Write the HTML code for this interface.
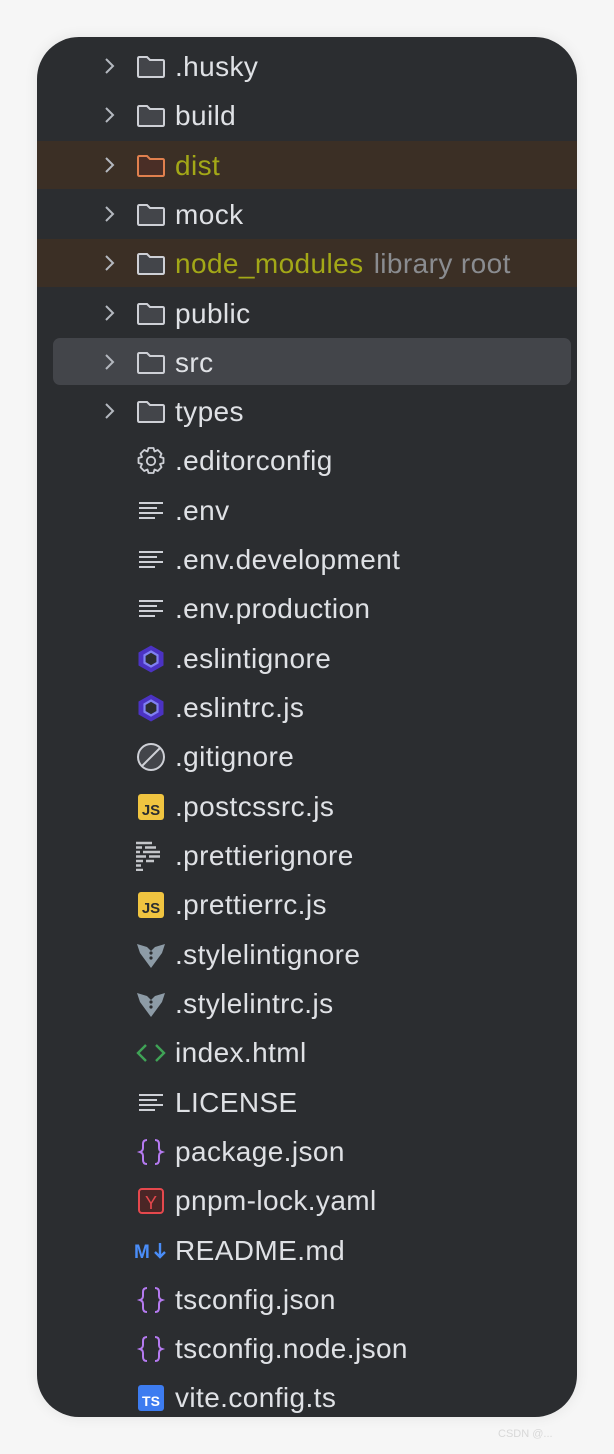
<!DOCTYPE html>
<html><head><meta charset="utf-8"><style>
body{margin:0;width:614px;height:1454px;background:#f6f6f6;position:relative;overflow:hidden;font-family:"Liberation Sans",sans-serif}
.panel{position:absolute;left:37px;top:37px;width:540px;height:1380px;background:#2b2d30;border-radius:42px;overflow:hidden;box-shadow:0 0 14px rgba(0,0,0,.08)}
.r{position:absolute;left:0;width:540px;height:49px}
.t{position:absolute;left:138px;top:0;line-height:49px;font-size:28px;letter-spacing:0.4px;color:#dfe1e5;white-space:nowrap}
.i{position:absolute;left:99px;top:10px;width:30px;height:30px}
.c{position:absolute;left:62px;top:14px;width:20px;height:20px}
</style></head><body>
<div class="panel">
<div style="position:absolute;left:0;top:104px;width:540px;height:48px;background:#3b2f25"></div>
<div style="position:absolute;left:0;top:202px;width:540px;height:48px;background:#3b2f25"></div>
<div style="position:absolute;left:16px;top:301px;width:518px;height:47px;background:#43454a;border-radius:7px"></div>
<svg width="0" height="0" style="position:absolute"><defs>
<symbol id="ch" viewBox="0 0 20 20"><path d="M7 3l7 7-7 7" fill="none" stroke="#b4b8bf" stroke-width="2"/></symbol>
<symbol id="fd" viewBox="0 0 30 30"><path d="M2 6.5q0-1.5 1.5-1.5h7.5l3 3h12.5q1.5 0 1.5 1.5v14q0 1.5-1.5 1.5h-23q-1.5 0-1.5-1.5z" fill="#43454a" stroke="#ced0d6" stroke-width="2"/></symbol>
<symbol id="fo" viewBox="0 0 30 30"><path d="M2 6.5q0-1.5 1.5-1.5h7.5l3 3h12.5q1.5 0 1.5 1.5v14q0 1.5-1.5 1.5h-23q-1.5 0-1.5-1.5z" fill="#4a2e26" stroke="#e0804e" stroke-width="2"/></symbol>
<symbol id="tx" viewBox="0 0 30 30"><path d="M3 7h24M3 12h18M3 17h24M3 22h16" stroke="#ced0d6" stroke-width="2"/></symbol>
<symbol id="es" viewBox="0 0 30 30"><path d="M15 1.5l12.5 7v13L15 28.5 2.5 21.5v-13z" fill="#4b32c3"/><path d="M15 7.5l6.5 3.8v7.4L15 22.5 8.5 18.7v-7.4z" fill="#2b2d30" stroke="#8080f2" stroke-width="2.2"/></symbol>
<symbol id="js" viewBox="0 0 30 30"><rect x="2" y="2" width="26" height="26" rx="3" fill="#f0c440"/><text x="15" y="23" font-size="15" font-family="Liberation Sans" font-weight="bold" text-anchor="middle" fill="#2b2d30">JS</text></symbol>
<symbol id="br" viewBox="0 0 30 30"><path d="M11 3q-4 0-4 4v4q0 3-3 4 3 1 3 4v4q0 4 4 4M19 3q4 0 4 4v4q0 3 3 4-3 1-3 4v4q0 4-4 4" fill="none" stroke="#b57af0" stroke-width="2"/></symbol>
<symbol id="sl" viewBox="0 0 30 30"><path d="M1 4l10 3 4 4 4-4 10-3-3 9-11 15-11-15z" fill="#8d9ba6"/><circle cx="15" cy="13" r="1.6" fill="#2b2d30"/><circle cx="15" cy="18" r="1.6" fill="#2b2d30"/></symbol>
</defs></svg>

<div class="r" style="top:5px"><svg class="c"><use href="#ch" width="20" height="20"/></svg><svg class="i"><use href="#fd" width="30" height="30"/></svg><span class="t">.husky</span></div>
<div class="r" style="top:54px"><svg class="c"><use href="#ch" width="20" height="20"/></svg><svg class="i"><use href="#fd" width="30" height="30"/></svg><span class="t">build</span></div>
<div class="r" style="top:104px"><svg class="c"><use href="#ch" width="20" height="20"/></svg><svg class="i"><use href="#fo" width="30" height="30"/></svg><span class="t" style="color:#a3a817">dist</span></div>
<div class="r" style="top:153px"><svg class="c"><use href="#ch" width="20" height="20"/></svg><svg class="i"><use href="#fd" width="30" height="30"/></svg><span class="t">mock</span></div>
<div class="r" style="top:202px"><svg class="c"><use href="#ch" width="20" height="20"/></svg><svg class="i"><use href="#fd" width="30" height="30"/></svg><span class="t"><span style="color:#a3a817">node_modules</span> <span style="color:#8a8c90;margin-left:2px">library root</span></span></div>
<div class="r" style="top:252px"><svg class="c"><use href="#ch" width="20" height="20"/></svg><svg class="i"><use href="#fd" width="30" height="30"/></svg><span class="t">public</span></div>
<div class="r" style="top:301px"><svg class="c"><use href="#ch" width="20" height="20"/></svg><svg class="i"><use href="#fd" width="30" height="30"/></svg><span class="t">src</span></div>
<div class="r" style="top:350px"><svg class="c"><use href="#ch" width="20" height="20"/></svg><svg class="i"><use href="#fd" width="30" height="30"/></svg><span class="t">types</span></div>
<div class="r" style="top:399px"><svg class="i" viewBox="0 0 30 30"><path d="M12.5 2h5l1 3.5 3.3-1.5 3.7 3.7-1.5 3.3 3.5 1v5l-3.5 1 1.5 3.3-3.7 3.7-3.3-1.5-1 3.5h-5l-1-3.5-3.3 1.5-3.7-3.7 1.5-3.3-3.5-1v-5l3.5-1-1.5-3.3 3.7-3.7 3.3 1.5z" fill="none" stroke="#ced0d6" stroke-width="1.8" stroke-linejoin="round"/><circle cx="15" cy="15" r="4.2" fill="none" stroke="#ced0d6" stroke-width="1.8"/></svg><span class="t">.editorconfig</span></div>
<div class="r" style="top:449px"><svg class="i"><use href="#tx" width="30" height="30"/></svg><span class="t">.env</span></div>
<div class="r" style="top:498px"><svg class="i"><use href="#tx" width="30" height="30"/></svg><span class="t">.env.development</span></div>
<div class="r" style="top:547px"><svg class="i"><use href="#tx" width="30" height="30"/></svg><span class="t">.env.production</span></div>
<div class="r" style="top:597px"><svg class="i"><use href="#es" width="30" height="30"/></svg><span class="t">.eslintignore</span></div>
<div class="r" style="top:646px"><svg class="i"><use href="#es" width="30" height="30"/></svg><span class="t">.eslintrc.js</span></div>
<div class="r" style="top:695px"><svg class="i" viewBox="0 0 30 30"><circle cx="15" cy="15" r="13" fill="#43454a" stroke="#ced0d6" stroke-width="2"/><path d="M6 24L24 6" stroke="#ced0d6" stroke-width="2"/></svg><span class="t">.gitignore</span></div>
<div class="r" style="top:745px"><svg class="i"><use href="#js" width="30" height="30"/></svg><span class="t">.postcssrc.js</span></div>
<div class="r" style="top:794px"><svg class="i" viewBox="0 0 30 30"><path d="M0 2h16M0 6.5h6M9 6.5h11M0 11h4M7 11h17M0 15.5h10M13 15.5h11M0 20h7M10 20h8M0 24.5h5M0 29h7" stroke="#c4c6ca" stroke-width="2.6"/></svg><span class="t">.prettierignore</span></div>
<div class="r" style="top:843px"><svg class="i"><use href="#js" width="30" height="30"/></svg><span class="t">.prettierrc.js</span></div>
<div class="r" style="top:893px"><svg class="i"><use href="#sl" width="30" height="30"/></svg><span class="t">.stylelintignore</span></div>
<div class="r" style="top:942px"><svg class="i"><use href="#sl" width="30" height="30"/></svg><span class="t">.stylelintrc.js</span></div>
<div class="r" style="top:991px"><svg class="i" viewBox="0 0 30 30"><path d="M10 7l-8 8 8 8M20 7l8 8-8 8" fill="none" stroke="#3fa356" stroke-width="2.4"/></svg><span class="t">index.html</span></div>
<div class="r" style="top:1041px"><svg class="i"><use href="#tx" width="30" height="30"/></svg><span class="t">LICENSE</span></div>
<div class="r" style="top:1090px"><svg class="i"><use href="#br" width="30" height="30"/></svg><span class="t">package.json</span></div>
<div class="r" style="top:1139px"><svg class="i" viewBox="0 0 30 30"><rect x="3" y="3" width="24" height="24" rx="3" fill="#4a2626" stroke="#e5484d" stroke-width="2"/><text x="15" y="23" font-size="18" font-family="Liberation Sans" text-anchor="middle" fill="#e5484d">Y</text></svg><span class="t">pnpm-lock.yaml</span></div>
<div class="r" style="top:1189px"><svg class="i" viewBox="0 0 34 30" style="left:97px;width:34px"><text x="0" y="22" font-size="19" font-weight="bold" font-family="Liberation Sans" fill="#4a8df8">M</text><path d="M26 7v14M21 16l5 5 5-5" fill="none" stroke="#4a8df8" stroke-width="2.4"/></svg><span class="t">README.md</span></div>
<div class="r" style="top:1238px"><svg class="i"><use href="#br" width="30" height="30"/></svg><span class="t">tsconfig.json</span></div>
<div class="r" style="top:1287px"><svg class="i"><use href="#br" width="30" height="30"/></svg><span class="t">tsconfig.node.json</span></div>
<div class="r" style="top:1336px"><svg class="i" viewBox="0 0 30 30"><rect x="2" y="2" width="26" height="26" rx="3" fill="#3d7cf0"/><text x="15" y="23" font-size="14" font-family="Liberation Sans" font-weight="bold" text-anchor="middle" fill="#fff">TS</text></svg><span class="t">vite.config.ts</span></div>
</div>
<div style="position:absolute;left:498px;top:1428px;font-size:11px;color:#d8d8d8">CSDN @...</div>
</body></html>
